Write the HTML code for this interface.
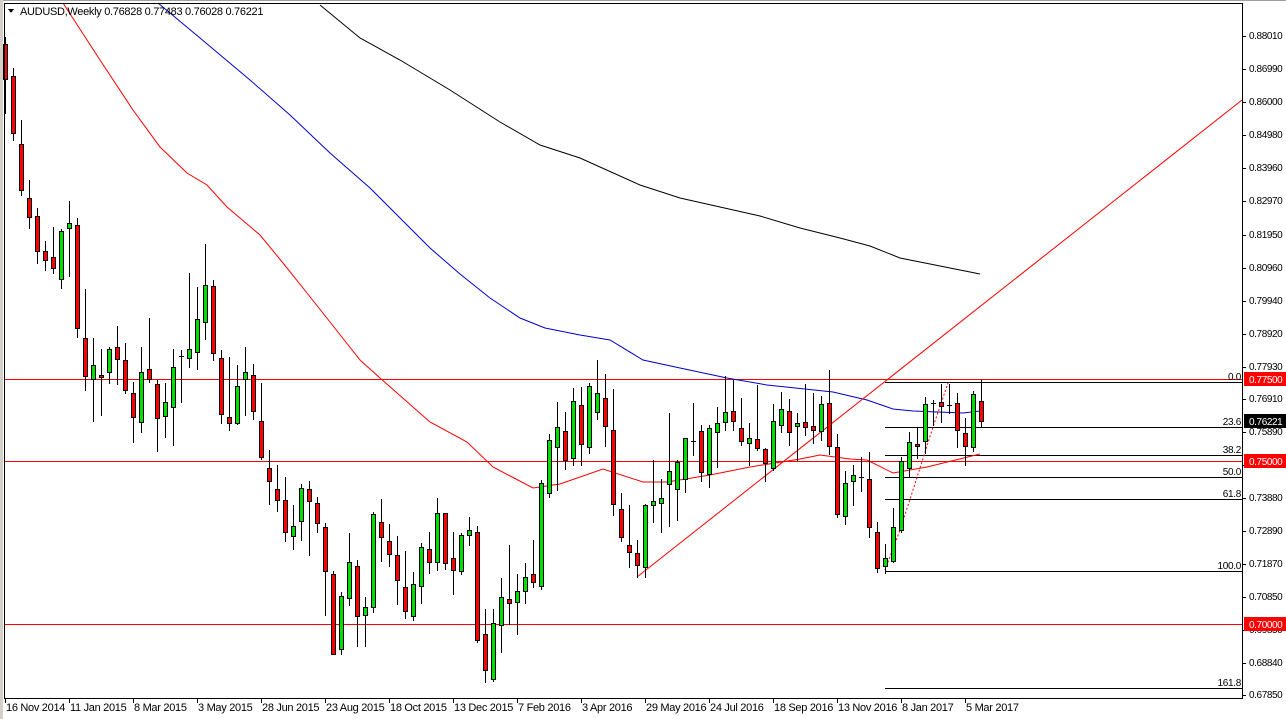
<!DOCTYPE html>
<html><head><meta charset="utf-8"><style>
html,body{margin:0;padding:0;background:#fff;width:1286px;height:719px;overflow:hidden}
svg{display:block}
text{font-family:"Liberation Sans",sans-serif}
</style></head><body>
<svg id="s" width="1286" height="719" xmlns="http://www.w3.org/2000/svg" shape-rendering="crispEdges">
<rect x="0" y="0" width="1286" height="719" fill="#fff"/>
<rect x="0" y="0" width="1286" height="1" fill="#a0a0a0"/>
<rect x="0" y="0" width="3" height="719" fill="#d4d0c8"/>
<!-- horizontal red lines -->
<rect x="4" y="379" width="1239" height="1" fill="#f00"/>
<rect x="4" y="461" width="1239" height="1" fill="#f00"/>
<rect x="4" y="624" width="1239" height="1" fill="#f00"/>
<!-- fib lines -->
<g fill="#000">
<rect x="885" y="382" width="358" height="1"/>
<rect x="885" y="427" width="358" height="1"/>
<rect x="885" y="455" width="358" height="1"/>
<rect x="885" y="477" width="358" height="1"/>
<rect x="885" y="499" width="358" height="1"/>
<rect x="885" y="571" width="358" height="1"/>
<rect x="885" y="688" width="358" height="1"/>
</g>
<g font-size="10" fill="#000" text-anchor="end" letter-spacing="-0.3">
<text x="1241" y="380">0.0</text>
<text x="1241" y="425">23.6</text>
<text x="1241" y="453">38.2</text>
<text x="1241" y="475">50.0</text>
<text x="1241" y="497">61.8</text>
<text x="1241" y="569">100.0</text>
<text x="1241" y="686">161.8</text>
</g>
<g fill="none" shape-rendering="auto" stroke-width="1">
<polyline stroke="#000" points="320,5 360,38 400,60 450,90 500,122 540,145 580,158 640,185 680,198 720,207 760,216 800,228 840,238 870,246 900,258 940,266 980,274"/>
<polyline stroke="#00c" points="158,3 200,38 250,80 290,115 330,153 370,188 400,218 430,248 460,274 490,298 520,318 545,328 580,335 610,340 643,360 680,368 727,378 767,385 833,392 867,400 893,409 913,411 963,413 980,411"/>
<polyline stroke="#f00" points="63,3 100,60 133,110 160,147 187,173 207,185 227,207 260,235 283,263 307,293 330,322 360,360 380,378 430,422 467,442 493,467 533,488 560,484 603,469 643,482 667,482 710,475 750,467 800,459 820,455 850,459 867,460 893,473 927,467 980,454"/>
<line stroke="#f00" x1="637" y1="577" x2="1242" y2="100"/>
<polyline stroke="#f00" stroke-dasharray="2,2" points="885,570 900,530 913,490 933,427 948,383"/>
</g>
<g id="c"></g>
<!-- frame -->
<rect x="4" y="3" width="1" height="696" fill="#000"/>
<rect x="4" y="3" width="1239" height="1" fill="#000"/>
<rect x="1242" y="3" width="1" height="696" fill="#000"/>
<rect x="4" y="698" width="1239" height="1" fill="#000"/>
<g id="ticks" fill="#000"></g>
<g font-size="10" fill="#000" letter-spacing="-0.4">
<text x="1249" y="39">0.88010</text><text x="1249" y="72">0.86990</text><text x="1249" y="105">0.86000</text>
<text x="1249" y="138">0.84980</text><text x="1249" y="171">0.83960</text><text x="1249" y="204">0.82970</text>
<text x="1249" y="238">0.81950</text><text x="1249" y="271">0.80960</text><text x="1249" y="304">0.79940</text>
<text x="1249" y="337">0.78920</text><text x="1249" y="370">0.77930</text><text x="1249" y="402">0.76910</text>
<text x="1249" y="435">0.75890</text><text x="1249" y="468">0.74880</text><text x="1249" y="501">0.73880</text>
<text x="1249" y="534">0.72890</text><text x="1249" y="567">0.71870</text><text x="1249" y="600">0.70850</text>
<text x="1249" y="633">0.69850</text><text x="1249" y="666">0.68840</text><text x="1249" y="698">0.67850</text>
</g>
<rect x="1244" y="372" width="42" height="14" fill="#f00"/>
<rect x="1244" y="414" width="42" height="14" fill="#000"/>
<rect x="1244" y="454" width="42" height="14" fill="#f00"/>
<rect x="1244" y="617" width="42" height="14" fill="#f00"/>
<g font-size="10" fill="#fff" letter-spacing="-0.4">
<text x="1249" y="383">0.77500</text>
<text x="1249" y="425">0.76221</text>
<text x="1249" y="465">0.75000</text>
<text x="1249" y="628">0.70000</text>
</g>
<g font-size="11" fill="#000" letter-spacing="-0.3">
<text x="6" y="711">16 Nov 2014</text><text x="70" y="711">11 Jan 2015</text><text x="134" y="711">8 Mar 2015</text>
<text x="198" y="711">3 May 2015</text><text x="262" y="711">28 Jun 2015</text><text x="326" y="711">23 Aug 2015</text>
<text x="390" y="711">18 Oct 2015</text><text x="454" y="711">13 Dec 2015</text><text x="518" y="711">7 Feb 2016</text>
<text x="582" y="711">3 Apr 2016</text><text x="646" y="711">29 May 2016</text><text x="710" y="711">24 Jul 2016</text>
<text x="774" y="711">18 Sep 2016</text><text x="838" y="711">13 Nov 2016</text><text x="902" y="711">8 Jan 2017</text>
<text x="966" y="711">5 Mar 2017</text>
</g>
<path d="M8 9 L14 9 L11 13 Z" fill="#000"/>
<text x="20" y="15" font-size="11" fill="#000" letter-spacing="-0.3">AUDUSD,Weekly  0.76828 0.77483 0.76028 0.76221</text>
</svg>
<script>
var d=[
[44,79,37,113,'r'],[76,133,68,140,'r'],[144,190,120,195,'r'],[198,217,180,228,'r'],[216,251,208,263,'r'],[251,260,241,270,'r'],[257,268,227,273,'r'],[231,279,229,288,'g'],[223,228,201,276,'g'],[225,328,218,337,'r'],
[338,376,289,390,'r'],[365,379,338,421,'g'],[375,377,349,415,'r'],[349,372,347,383,'g'],[347,359,326,384,'r'],[360,390,343,393,'r'],[393,417,382,442,'r'],[372,422,347,432,'g'],[369,379,318,382,'r'],[384,418,380,451,'r'],
[402,416,383,437,'g'],[367,407,349,445,'g'],[356,356,350,402,'d'],[349,358,273,367,'g'],[319,352,287,369,'g'],[285,322,244,339,'g'],[286,353,280,360,'r'],[358,414,350,423,'r'],[417,423,357,430,'r'],[386,423,365,424,'g'],
[372,379,347,415,'g'],[375,411,364,419,'r'],[421,457,383,459,'r'],[468,481,450,504,'r'],[489,500,465,511,'r'],[500,532,477,541,'r'],[526,536,505,549,'g'],[488,521,484,540,'g'],[489,501,481,555,'r'],[503,523,497,532,'r'],
[527,571,523,615,'r'],[574,654,571,654,'r'],[596,649,592,654,'g'],[562,598,533,605,'g'],[566,616,560,646,'r'],[607,615,597,646,'g'],[514,607,512,612,'g'],[522,537,499,561,'r'],[541,554,524,566,'r'],[555,580,536,604,'r'],
[587,611,551,618,'r'],[584,616,572,620,'g'],[547,586,543,603,'g'],[549,562,532,573,'r'],[513,562,498,570,'g'],[513,563,513,569,'r'],[558,570,532,594,'r'],[535,571,533,574,'g'],[530,535,517,545,'g'],[532,640,526,642,'r'],
[634,670,609,682,'r'],[623,679,609,681,'g'],[597,625,578,652,'g'],[599,603,545,624,'r'],[591,602,574,634,'g'],[577,591,563,603,'g'],[574,582,540,587,'r'],[483,586,480,589,'g'],[440,493,434,497,'g'],[427,447,402,490,'g'],
[431,460,412,469,'r'],[401,458,388,465,'g'],[405,444,387,465,'r'],[386,447,383,453,'g'],[393,412,360,419,'g'],[398,426,374,446,'r'],[430,504,389,515,'r'],[509,537,493,541,'r'],[545,552,505,567,'r'],[553,565,540,577,'r'],
[505,567,504,577,'g'],[501,505,460,522,'g'],[498,503,479,532,'g'],[471,484,413,526,'g'],[462,489,460,520,'g'],[438,479,438,492,'g'],[441,441,403,455,'d'],[431,472,425,481,'r'],[428,474,425,487,'g'],[423,432,407,467,'g'],
[412,422,376,430,'g'],[411,421,380,430,'r'],[428,441,398,445,'r'],[438,443,423,465,'g'],[439,448,385,450,'r'],[449,463,448,481,'r'],[421,468,404,470,'g'],[409,425,392,432,'g'],[411,432,399,445,'r'],[423,426,413,460,'g'],
[422,427,384,435,'r'],[426,430,393,443,'r'],[404,431,396,440,'g'],[403,446,370,454,'r'],[447,514,434,517,'r'],[483,516,471,524,'g'],[475,481,465,505,'g'],[477,477,457,491,'d'],[479,527,452,537,'r'],[532,568,522,572,'r'],
[558,566,544,573,'g'],[527,561,508,562,'g'],[461,530,457,532,'g'],[442,468,432,476,'g'],[444,446,428,458,'r'],[404,441,397,453,'g'],[403,403,400,425,'d'],[402,406,384,422,'r'],[405,405,384,413,'d'],[403,430,393,447,'r'],
[433,446,418,465,'r'],[394,447,391,451,'g'],[401,421,380,427,'r']];
var ns="http://www.w3.org/2000/svg",g=document.getElementById('c');
function R(x,y,w,h,f){var r=document.createElementNS(ns,'rect');r.setAttribute('x',x);r.setAttribute('y',y);r.setAttribute('width',w);r.setAttribute('height',Math.max(h,1));r.setAttribute('fill',f);g.appendChild(r);}
d.forEach(function(c,i){var cx=5+8*i;var wt=Math.max(c[2],4);R(cx,wt,1,c[3]-wt+1,'#000');
if(c[4]=='d'){R(cx-2,c[0],5,1,'#000');return;}
var top=Math.max(c[0],4),h=c[1]-top+1;R(cx-2,top,5,h,'#000');if(h>2)R(cx-1,top+1,3,h-2,c[4]=='r'?'#f00':'#00e000');});
var t=document.getElementById('ticks');
for(var i=0;i<16;i++){var r=document.createElementNS(ns,'rect');r.setAttribute('x',5+64*i);r.setAttribute('y',699);r.setAttribute('width',1);r.setAttribute('height',4);t.appendChild(r);}
[36,69,102,135,168,201,235,268,301,334,367,399,432,465,498,531,564,597,630,663,695].forEach(function(y){var r=document.createElementNS(ns,'rect');r.setAttribute('x',1243);r.setAttribute('y',y);r.setAttribute('width',3);r.setAttribute('height',1);t.appendChild(r);});
</script>
</body></html>
